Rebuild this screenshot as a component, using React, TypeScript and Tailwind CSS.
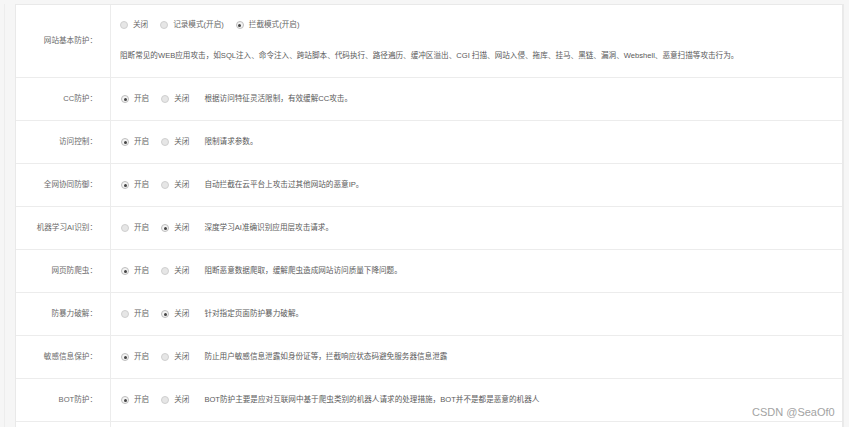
import { JSX } from "react";

type Row = {
  label: string;
  on: boolean;
  desc: string;
};

const ROWS: Row[] = [
  { label: "CC防护：", on: true, desc: "根据访问特征灵活限制，有效缓解CC攻击。" },
  { label: "访问控制：", on: true, desc: "限制请求参数。" },
  { label: "全网协同防御：", on: true, desc: "自动拦截在云平台上攻击过其他网站的恶意IP。" },
  { label: "机器学习AI识别：", on: false, desc: "深度学习AI准确识别应用层攻击请求。" },
  { label: "网页防爬虫：", on: true, desc: "阻断恶意数据爬取，缓解爬虫造成网站访问质量下降问题。" },
  { label: "防暴力破解：", on: false, desc: "针对指定页面防护暴力破解。" },
  {
    label: "敏感信息保护：",
    on: true,
    desc: "防止用户敏感信息泄露如身份证等，拦截响应状态码避免服务器信息泄露",
  },
  {
    label: "BOT防护：",
    on: true,
    desc: "BOT防护主要是应对互联网中基于爬虫类别的机器人请求的处理措施，BOT并不是都是恶意的机器人",
  },
];

function Radio({ checked, label }: { checked: boolean; label: string }): JSX.Element {
  return (
    <span className="flex items-center gap-[5px] text-[#666]">
      {checked ? (
        <span className="flex h-[8px] w-[8px] items-center justify-center rounded-full border border-[#bdbdbd] bg-[#f4f4f4]">
          <span className="h-[3px] w-[3px] rounded-full bg-[#444]" />
        </span>
      ) : (
        <span className="h-[8px] w-[8px] rounded-full border border-[#cfcfcf] bg-[#e6e6e6]" />
      )}
      {label}
    </span>
  );
}

export default function App(): JSX.Element {
  return (
    <div
      className="relative flex h-[427px] w-[849px] overflow-hidden bg-[#f6f6f6] pt-[4px] text-[7.6px] leading-none"
      style={{ fontFamily: '"Liberation Sans", "Noto Sans CJK SC", sans-serif' }}
    >
      <div className="ml-[4px] w-[11px] border-l border-[#ededed]" />
      <div className="w-[828px] border-l border-r border-t border-[#e9e9e9] bg-white">
        <div className="grid h-[73px] grid-cols-[95px_1fr] border-b border-[#ececec]">
          <div className="flex items-center justify-end border-r border-[#ececec] pr-[13px] text-[#6a6a6a]">
            网站基本防护：
          </div>
          <div className="flex flex-col pl-[9px] pt-[16px]">
            <div className="flex items-center gap-[12px]">
              <Radio checked={false} label="关闭" />
              <Radio checked={false} label="记录模式(开启)" />
              <Radio checked label="拦截模式(开启)" />
            </div>
            <div className="mt-[23px] text-[#5a5a5a]">
              阻断常见的WEB应用攻击，如SQL注入、命令注入、跨站脚本、代码执行、路径遍历、缓冲区溢出、CGI 扫描、网站入侵、拖库、挂马、黑链、漏洞、Webshell、恶意扫描等攻击行为。
            </div>
          </div>
        </div>
        {ROWS.map((row) => (
          <div
            key={row.label}
            className="grid h-[43px] grid-cols-[95px_1fr] border-b border-[#ececec]"
          >
            <div className="flex items-center justify-end border-r border-[#ececec] pr-[13px] text-[#6a6a6a]">
              {row.label}
            </div>
            <div className="flex items-center pl-[10px]">
              <div className="flex items-center gap-[12px]">
                <Radio checked={row.on} label="开启" />
                <Radio checked={!row.on} label="关闭" />
              </div>
              <span className="ml-[15px] text-[#5a5a5a]">{row.desc}</span>
            </div>
          </div>
        ))}
        <div className="grid h-[43px] grid-cols-[95px_1fr]">
          <div className="border-r border-[#ececec]" />
          <div />
        </div>
      </div>
      <div className="flex-1 border-l border-[#eaeaea]" />
      <span
        className="absolute left-[752px] top-[407px] text-[11px] text-[#a3a3a3]"
        style={{ fontFamily: '"Liberation Sans", sans-serif' }}
      >
        CSDN @SeaOf0
      </span>
    </div>
  );
}
